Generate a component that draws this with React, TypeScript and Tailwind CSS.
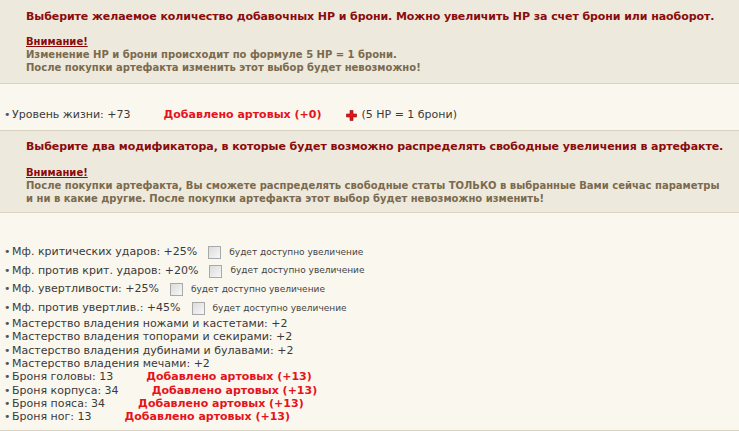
import React from "react";

const F = { fontFamily: '"DejaVu Sans", Verdana, sans-serif' };

function Checkbox() {
  return (
    <span className="inline-block w-[13px] h-[13px] border border-[#a9a9a9] bg-gradient-to-br from-[#dcdcdc] to-[#f7f7f7] shrink-0" />
  );
}

function Plus() {
  return (
    <svg width="11" height="11" viewBox="0 0 11 11" className="shrink-0">
      <path d="M4 0.5h3v3.5h3.5v3h-3.5v3.5h-3v-3.5h-3.5v-3h3.5z" fill="#e0141c" stroke="#8a0a0a" strokeWidth="0.6" />
    </svg>
  );
}

function Bullet() {
  return <span className="w-[12px] pl-[4px] shrink-0 text-[#555]">•</span>;
}

function Warn({ title, lines, top }: { title: string; lines: string[]; top: boolean }) {
  return (
    <div className={`bg-[#ede9dc] border-b border-[#dad3c1] pl-[26px] pr-[2px] ${top ? "pt-[10px] pb-[9px]" : "pt-[9px] pb-[7px]"}`}>
      <div className="text-[11px] leading-[14px] font-bold text-[#8a0c0c] tracking-[-0.08px] whitespace-nowrap">{title}</div>
      <div className={`${top ? "mt-[11px]" : "mt-[12px]"} text-[10px] leading-[13px] font-bold text-[#7b6a4e]`}>
        <div className="text-[#8b0a0a] underline">Внимание!</div>
        {lines.map((l, i) => (
          <div key={i} className="whitespace-nowrap">{l}</div>
        ))}
      </div>
    </div>
  );
}

const red = "text-[11px] font-bold text-[#e5141c]";

function CbRow({ text }: { text: string }) {
  return (
    <div className="flex items-center h-[18.7px]">
      <Bullet />
      <span>{text}</span>
      <span className="ml-[11px] flex"><Checkbox /></span>
      <span className="ml-[8px] text-[9px] text-[#444]">будет доступно увеличение</span>
    </div>
  );
}

function Row({ text, add }: { text: string; add?: string }) {
  return (
    <div className="flex items-center h-[13.3px]">
      <Bullet />
      <span>{text}</span>
      {add && <span className={`ml-[33px] ${red}`}>{add}</span>}
    </div>
  );
}

export default function App() {
  return (
    <div style={F} className="w-[739px] h-[431px] bg-[#faf7ee] text-[#3a3a3a] text-[11px] overflow-hidden">
      <Warn
        top
        title="Выберите желаемое количество добавочных НР и брони. Можно увеличить НР за счет брони или наоборот."
        lines={[
          "Изменение НР и брони происходит по формуле 5 НР = 1 брони.",
          "После покупки артефакта изменить этот выбор будет невозможно!",
        ]}
      />
      <div className="border-b border-[#dad3c1] pt-[22px] pb-[6px]">
        <div className="flex items-center h-[18px]">
          <Bullet />
          <span>Уровень жизни: +73</span>
          <span className={`ml-[33px] ${red}`}>Добавлено артовых (+0)</span>
          <span className="ml-[25px] flex"><Plus /></span>
          <span className="ml-[4px]">(5 НР = 1 брони)</span>
        </div>
      </div>
      <Warn
        top={false}
        title="Выберите два модификатора, в которые будет возможно распределять свободные увеличения в артефакте."
        lines={[
          "После покупки артефакта, Вы сможете распределять свободные статы ТОЛЬКО в выбранные Вами сейчас параметры",
          "и ни в какие другие. После покупки артефакта этот выбор будет невозможно изменить!",
        ]}
      />
      <div className="border-b border-[#dad3c1] pt-[30px] pb-[6px]">
        <CbRow text="Мф. критических ударов: +25%" />
        <CbRow text="Мф. против крит. ударов: +20%" />
        <CbRow text="Мф. увертливости: +25%" />
        <CbRow text="Мф. против увертлив.: +45%" />
        <Row text="Мастерство владения ножами и кастетами: +2" />
        <Row text="Мастерство владения топорами и секирами: +2" />
        <Row text="Мастерство владения дубинами и булавами: +2" />
        <Row text="Мастерство владения мечами: +2" />
        <Row text="Броня головы: 13" add="Добавлено артовых (+13)" />
        <Row text="Броня корпуса: 34" add="Добавлено артовых (+13)" />
        <Row text="Броня пояса: 34" add="Добавлено артовых (+13)" />
        <Row text="Броня ног: 13" add="Добавлено артовых (+13)" />
      </div>
    </div>
  );
}
